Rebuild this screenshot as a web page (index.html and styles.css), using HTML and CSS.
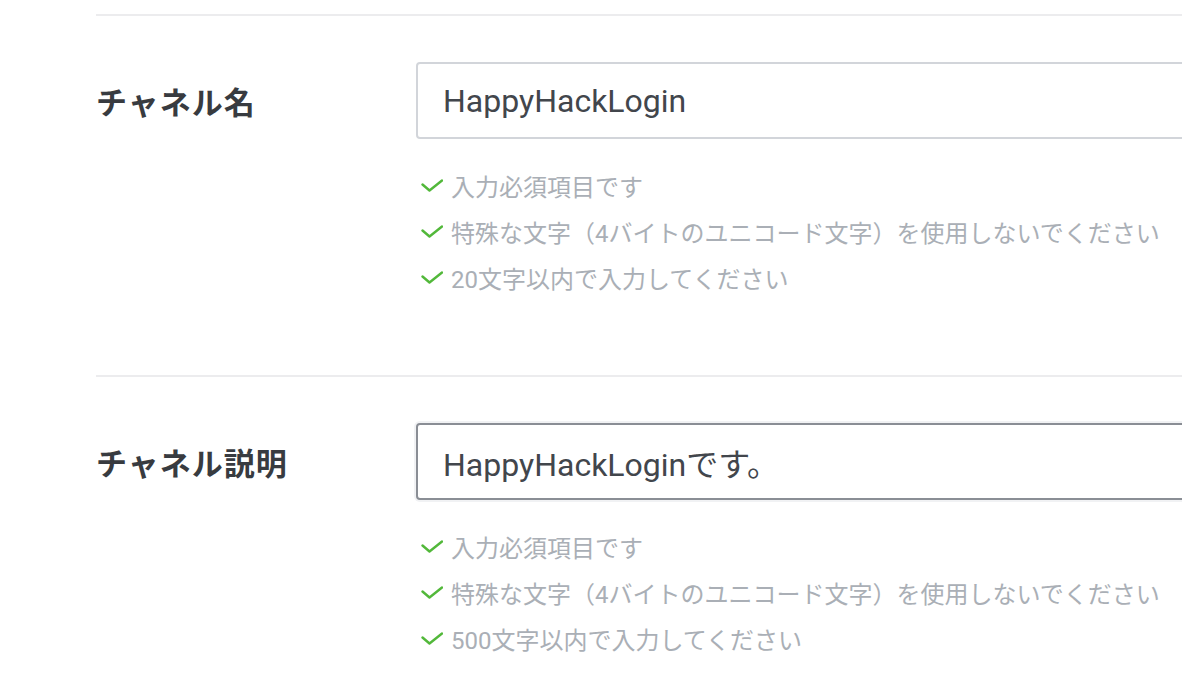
FILE: index.html
```html
<!DOCTYPE html>
<html lang="ja">
<head>
<meta charset="utf-8">
<title>チャネル設定</title>
<link rel="stylesheet" href="styles.css">
</head>
<body>
<div class="page">
  <section class="field">
    <div class="row">
      <label class="label" for="name">チャネル名</label>
      <div class="control">
        <input id="name" class="input" type="text" value="HappyHackLogin">
        <ul class="hints">
          <li class="hint"><svg class="check" viewBox="0 0 22 13"><polyline points="1.5,5.5 8.5,11.5 21,1.5"/></svg><span>入力必須項目です</span></li>
          <li class="hint"><svg class="check" viewBox="0 0 22 13"><polyline points="1.5,5.5 8.5,11.5 21,1.5"/></svg><span>特殊な文字（4バイトのユニコード文字）を使用しないでください</span></li>
          <li class="hint"><svg class="check" viewBox="0 0 22 13"><polyline points="1.5,5.5 8.5,11.5 21,1.5"/></svg><span>20文字以内で入力してください</span></li>
        </ul>
      </div>
    </div>
  </section>
  <section class="field">
    <div class="row">
      <label class="label" for="desc">チャネル説明</label>
      <div class="control">
        <input id="desc" class="input input-focus" type="text" value="HappyHackLoginです。">
        <ul class="hints">
          <li class="hint"><svg class="check" viewBox="0 0 22 13"><polyline points="1.5,5.5 8.5,11.5 21,1.5"/></svg><span>入力必須項目です</span></li>
          <li class="hint"><svg class="check" viewBox="0 0 22 13"><polyline points="1.5,5.5 8.5,11.5 21,1.5"/></svg><span>特殊な文字（4バイトのユニコード文字）を使用しないでください</span></li>
          <li class="hint"><svg class="check" viewBox="0 0 22 13"><polyline points="1.5,5.5 8.5,11.5 21,1.5"/></svg><span>500文字以内で入力してください</span></li>
        </ul>
      </div>
    </div>
  </section>
</div>
</body>
</html>
```
FILE: styles.css
```css
html, body {
  margin: 0;
  padding: 0;
  background: #ffffff;
}

body {
  font-family: "Roboto", "Noto Sans CJK JP", sans-serif;
  overflow: hidden;
}

.page {
  width: 1182px;
  height: 690px;
  overflow: hidden;
  padding: 14px 0 0 96px;
  box-sizing: border-box;
}

.field {
  width: 1200px;
  border-top: 2px solid #ececee;
  padding: 46px 0 75px 0;
}

.row {
  display: grid;
  grid-template-columns: 320px 1fr;
  align-items: start;
}

.label {
  font-family: "Noto Sans CJK JP", sans-serif;
  font-weight: 700;
  font-size: 31px;
  color: #383b40;
  height: 77px;
  display: flex;
  align-items: center;
  letter-spacing: 1px;
}

.control {
  display: flex;
  flex-direction: column;
}

.input {
  box-sizing: border-box;
  width: 900px;
  height: 77px;
  border: 2px solid #d2d5da;
  border-radius: 4px;
  padding: 0 0 0 25px;
  font-family: "Roboto", "Noto Sans CJK JP", sans-serif;
  font-size: 32px;
  color: #42464c;
  background: #ffffff;
  outline: none;
  margin: 0;
}

.input-focus {
  border-color: #8a8e95;
  box-shadow: 0 0 0 2px #f1f2f4;
}

.hints {
  list-style: none;
  margin: 23px 0 0 0;
  padding: 0;
}

.hint {
  display: flex;
  align-items: center;
  height: 46px;
  font-family: "Roboto", "Noto Sans CJK JP", sans-serif;
  font-size: 24px;
  color: #aaafb6;
  padding-left: 5px;
}

.check {
  width: 22px;
  height: 13px;
  margin-right: 8px;
  flex: none;
}

.check polyline {
  fill: none;
  stroke: #52b83a;
  stroke-width: 2.4;
  stroke-linecap: round;
  stroke-linejoin: round;
}
```
